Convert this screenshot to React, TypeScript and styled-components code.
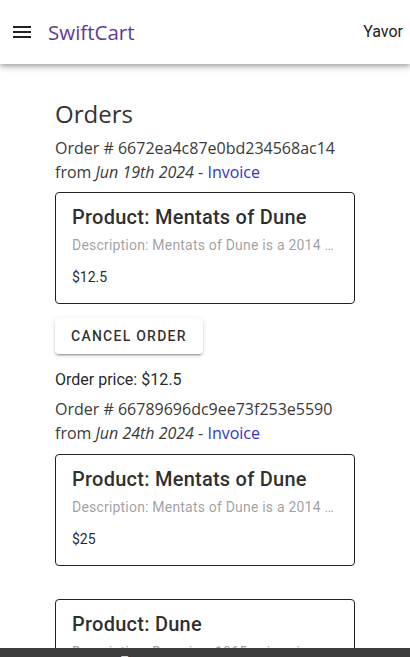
import React from "react";
import styled, { createGlobalStyle } from "styled-components";

const Global = createGlobalStyle`
  html, body { margin: 0; padding: 0; background: #fff; }
  body { font-family: "Roboto", "Liberation Sans", sans-serif; color: rgba(0,0,0,0.87); }
  * { box-sizing: border-box; }
`;

const AppBar = styled.header`
  height: 64px;
  background: #fff;
  display: flex;
  align-items: center;
  padding: 0 7px 0 10px;
  box-shadow: 0px 2px 4px -1px rgba(0,0,0,0.2), 0px 4px 5px 0px rgba(0,0,0,0.14), 0px 1px 10px 0px rgba(0,0,0,0.12);
  position: relative;
  z-index: 2;
`;

const MenuButton = styled.button`
  border: 0;
  background: none;
  padding: 0;
  width: 24px;
  height: 24px;
  display: flex;
  color: #222;
  cursor: pointer;
`;

const Brand = styled.div`
  margin-left: 14px;
  font-family: "Open Sans", sans-serif;
  font-size: 20.5px;
  line-height: 28px;
  color: #5e3b96;
  flex: 1;
`;

const UserName = styled.div`
  font-family: "Roboto", sans-serif;
  font-size: 16px;
  line-height: 24px;
  color: #222;
`;

const Main = styled.main`
  width: 300px;
  margin: 0 auto;
  padding: 34px 0 80px;
`;

const Title = styled.h1`
  margin: 0 0 6px;
  font-family: "Open Sans", sans-serif;
  font-weight: 400;
  font-size: 24px;
  line-height: 32px;
  color: #333;
`;

const OrderInfo = styled.div<{ $top: number }>`
  margin-top: ${(p) => p.$top}px;
  font-family: "Open Sans", sans-serif;
  font-size: 16px;
  line-height: 24px;
  color: #3a3a3a;
  white-space: nowrap;
`;

const Invoice = styled.a`
  color: #3434c8;
  text-decoration: none;
`;

const Card = styled.div<{ $top: number }>`
  margin-top: ${(p) => p.$top}px;
  border: 1px solid #222;
  border-radius: 4px;
  padding: 12px 16px 16px;
  background: #fff;
`;

const ProductTitle = styled.div`
  font-family: "Roboto", sans-serif;
  font-weight: 500;
  font-size: 20px;
  line-height: 24px;
  letter-spacing: 0.25px;
  color: rgba(0,0,0,0.84);
  white-space: nowrap;
`;

const ProductDesc = styled.div`
  margin-top: 6px;
  font-size: 14px;
  line-height: 20px;
  letter-spacing: 0.2px;
  color: rgba(0,0,0,0.4);
  white-space: nowrap;
  overflow: hidden;
  text-overflow: ellipsis;
`;

const ProductPrice = styled.div`
  margin-top: 12px;
  font-size: 14px;
  line-height: 20px;
  color: rgba(0,0,0,0.87);
`;

const Button = styled.button`
  margin-top: 14px;
  height: 36px;
  padding: 0 16px;
  border: 0;
  border-radius: 4px;
  background: #fff;
  font-family: "Roboto", sans-serif;
  font-weight: 500;
  font-size: 14px;
  letter-spacing: 1.25px;
  text-transform: uppercase;
  color: rgba(0,0,0,0.82);
  box-shadow: 0px 3px 1px -2px rgba(0,0,0,0.2), 0px 2px 2px 0px rgba(0,0,0,0.14), 0px 1px 5px 0px rgba(0,0,0,0.12);
  cursor: pointer;
`;

const OrderPrice = styled.div`
  margin-top: 14px;
  font-size: 16px;
  line-height: 24px;
  color: rgba(0,0,0,0.87);
`;

const Footer = styled.footer`
  position: fixed;
  left: 0;
  right: 0;
  top: calc(100vh - 9px);
  height: 48px;
  background: #3c3c3c;
  color: #d8d8d8;
  font-family: "Roboto", sans-serif;
  font-size: 12px;
  line-height: 16px;
  padding: 4.5px 0 0 121px;
  z-index: 3;
`;

type Product = { title: string; desc: string; price: string };
type Order = {
  id: string;
  date: string;
  products: Product[];
  cancel: boolean;
  total: string;
};

const orders: Order[] = [
  {
    id: "6672ea4c87e0bd234568ac14",
    date: "Jun 19th 2024",
    products: [
      {
        title: "Mentats of Dune",
        desc: "Mentats of Dune is a 2014 science fiction novel by Brian Herbert and Kevin J. Anderson",
        price: "$12.5",
      },
    ],
    cancel: true,
    total: "$12.5",
  },
  {
    id: "66789696dc9ee73f253e5590",
    date: "Jun 24th 2024",
    products: [
      {
        title: "Mentats of Dune",
        desc: "Mentats of Dune is a 2014 science fiction novel by Brian Herbert and Kevin J. Anderson",
        price: "$25",
      },
      {
        title: "Dune",
        desc: "Dune is a 1965 epic science fiction novel by American author Frank Herbert",
        price: "$15",
      },
    ],
    cancel: false,
    total: "$40",
  },
];

const MenuIcon = () => (
  <svg width="24" height="24" viewBox="0 0 24 24" fill="currentColor">
    <path d="M3 18h18v-2H3v2zm0-5h18v-2H3v2zm0-7v2h18V6H3z" />
  </svg>
);

export default function App() {
  return (
    <>
      <Global />
      <AppBar>
        <MenuButton aria-label="menu">
          <MenuIcon />
        </MenuButton>
        <Brand>SwiftCart</Brand>
        <UserName>Yavor</UserName>
      </AppBar>
      <Main>
        <Title>Orders</Title>
        {orders.map((o, oi) => (
          <React.Fragment key={o.id}>
            <OrderInfo $top={oi === 0 ? 0 : 5}>
              <div>Order # {o.id}</div>
              <div>
                from <em>{o.date}</em> - <Invoice href="#">Invoice</Invoice>
              </div>
            </OrderInfo>
            {o.products.map((p, pi) => (
              <Card key={pi} $top={pi === 0 ? (oi === 0 ? 8 : 9) : 33}>
                <ProductTitle>Product: {p.title}</ProductTitle>
                <ProductDesc>Description: {p.desc}</ProductDesc>
                <ProductPrice>{p.price}</ProductPrice>
              </Card>
            ))}
            {o.cancel && <Button>Cancel order</Button>}
            <OrderPrice>Order price: {o.total}</OrderPrice>
          </React.Fragment>
        ))}
      </Main>
      <Footer>Terms</Footer>
    </>
  );
}
